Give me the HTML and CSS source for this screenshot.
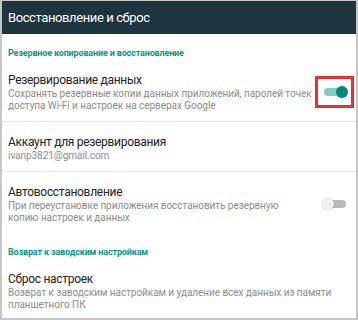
FILE: index.html
```html
<!DOCTYPE html>
<html>

<head>
  <title>Восстановление и сброс</title>
  <link rel="stylesheet" href="styles.css">
</head>

<body>
  <div class="screen">
    <div class="appbar">Восстановление и сброс</div>

    <div class="category">Резервное копирование и восстановление</div>

    <div class="pref divided">
      <div class="pref-text">
        <div class="pref-title">Резервирование данных</div>
        <div class="pref-summary">Сохранять резервные копии данных приложений, паролей точек доступа Wi-Fi и настроек на серверах Google</div>
      </div>
      <div class="marked">
        <span class="switch on"></span>
      </div>
    </div>

    <div class="pref divided">
      <div class="pref-text">
        <div class="pref-title">Аккаунт для резервирования</div>
        <div class="pref-summary">ivanp3821@gmail.com</div>
      </div>
    </div>

    <div class="pref">
      <div class="pref-text">
        <div class="pref-title">Автовосстановление</div>
        <div class="pref-summary">При переустановке приложения восстановить резервную копию настроек и данных</div>
      </div>
      <span class="switch"></span>
    </div>

    <div class="category">Возврат к заводским настройкам</div>

    <div class="pref">
      <div class="pref-text">
        <div class="pref-title">Сброс настроек</div>
        <div class="pref-summary">Возврат к заводским настройкам и удаление всех данных из памяти планшетного ПК</div>
      </div>
    </div>
  </div>
</body>

</html>
```

FILE: styles.css
```css
body {
  margin: 0;
  font-family: Roboto, 'Noto Sans', sans-serif;
  background-color: #fff;
}

.screen {
  width: 358px;
  height: 320px;
  box-sizing: border-box;
  border: 2px solid #c6c6c6;
  border-top-width: 1px;
  background-color: #fff;
  overflow: hidden;
}

/* Top bar */
.appbar {
  height: 33px;
  display: flex;
  align-items: center;
  padding-left: 6px;
  background-color: #1e343e;
  color: #fff;
  font-size: 13px;
  letter-spacing: -0.4px;
}

/* Category headers */
.category {
  padding: 12px 6px 0;
  line-height: 14px;
  font-size: 9px;
  font-weight: bold;
  letter-spacing: -0.15px;
  color: #009a8a;
}

/* Preference rows */
.pref {
  display: flex;
  align-items: center;
  padding: 12px 8px 9px 6px;
}

.pref.divided {
  border-bottom: 1px solid #e8e8e8;
}

.pref-text {
  flex: 1;
}

.pref-title {
  font-size: 12px;
  line-height: 16px;
  letter-spacing: -0.3px;
  color: #222;
}

.pref-summary {
  font-size: 10px;
  line-height: 12px;
  letter-spacing: -0.05px;
  color: #8c8c8c;
}

/* Switches */
.switch {
  position: relative;
  display: block;
  width: 26px;
  height: 12px;
  margin-left: 14px;
}

.switch:before {
  content: "";
  position: absolute;
  left: 2px;
  top: 2px;
  width: 22px;
  height: 8px;
  border-radius: 4px;
  background-color: #b9b9b9;
}

.switch:after {
  content: "";
  position: absolute;
  left: 0;
  top: 0;
  width: 12px;
  height: 12px;
  border-radius: 50%;
  background-color: #f1f1f1;
  box-shadow: 0 0 1px rgba(0, 0, 0, 0.3);
}

.switch.on {
  margin-left: 0;
}

.switch.on:before {
  background-color: #80cbc4;
}

.switch.on:after {
  left: 14px;
  background-color: #00897b;
  box-shadow: none;
}

/* Red highlight around the backup switch */
.marked {
  border: 3px solid #ef2b33;
  padding: 7px 3px 7px 4px;
  margin-right: -6px;
}
```
